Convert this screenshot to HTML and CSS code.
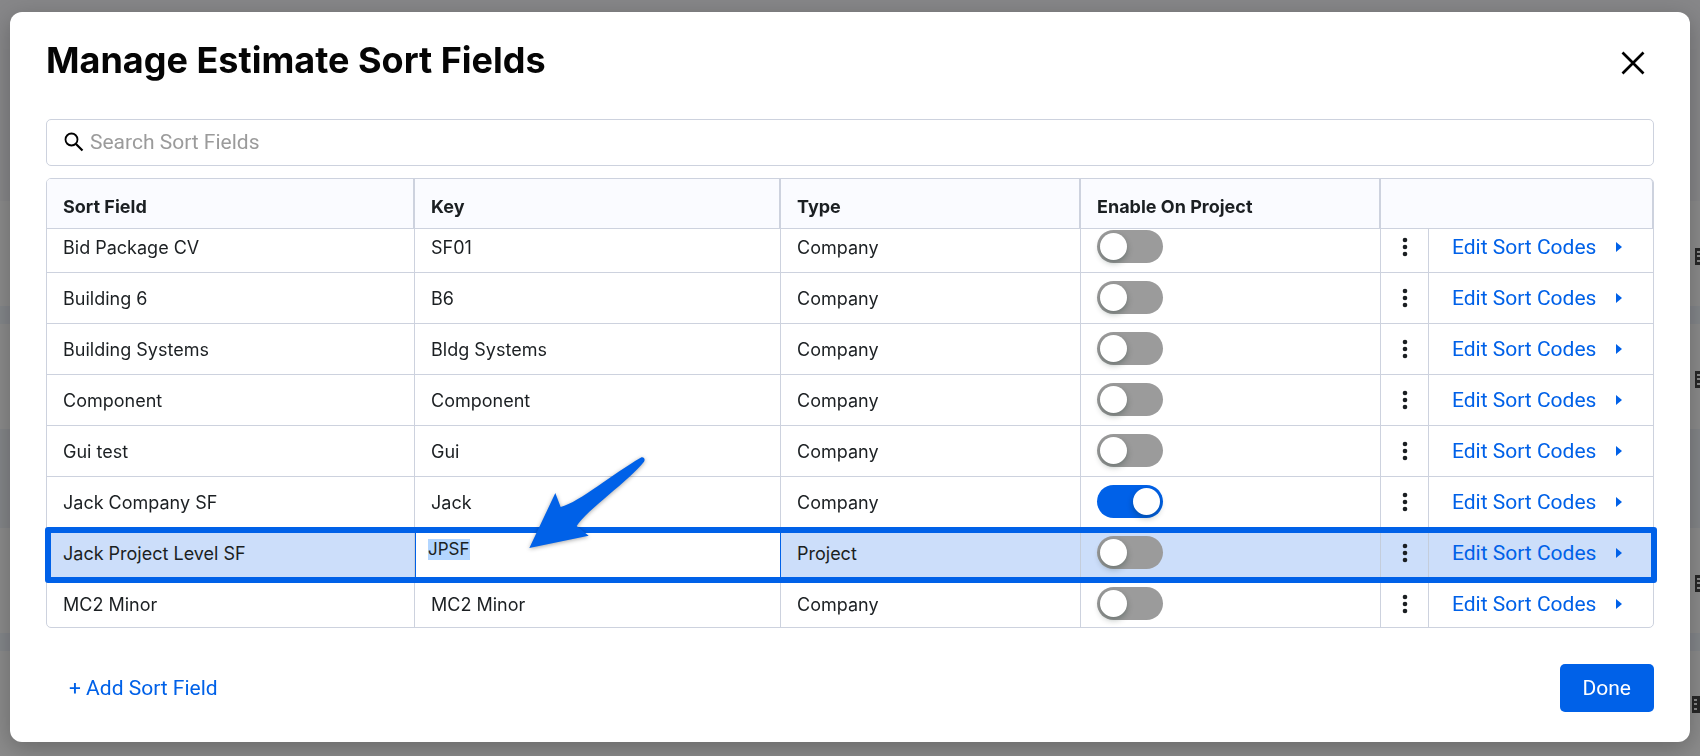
FILE: index.html
```html
<!DOCTYPE html>
<html lang="en">

<head>
    <meta charset="UTF-8">
    <meta name="viewport" content="width=device-width, initial-scale=1.0">
    <title>Manage Estimate Sort Fields</title>
    <link rel="stylesheet" href="styles.css">
</head>

<body>
    <svg class="symbols" aria-hidden="true">
        <symbol id="dots" viewBox="0 0 6 20">
            <circle cx="3" cy="3" r="2.3" />
            <circle cx="3" cy="10" r="2.3" />
            <circle cx="3" cy="17" r="2.3" />
        </symbol>
        <symbol id="caret" viewBox="0 0 6 10">
            <path d="M0 0 L6 5 L0 10 Z" />
        </symbol>
        <symbol id="building" viewBox="0 0 16 18">
            <path d="M0 1h8V0h8v18H0z" fill="#272727" />
            <path d="M2 4h3v2H2zM2 8h3v2H2zM2 13h3v2H2z" fill="#8a8a8a" />
        </symbol>
    </svg>

    <!-- page behind the dialog -->
    <div class="backdrop" aria-hidden="true">
        <div class="band band-top"></div>
        <div class="band band-item"><svg class="building"><use href="#building" /></svg></div>
        <div class="band band-gap"></div>
        <div class="band band-item"><svg class="building"><use href="#building" /></svg></div>
        <div class="band band-group"></div>
        <div class="band band-item"><svg class="building"><use href="#building" /></svg></div>
        <div class="band band-gap"></div>
        <div class="band band-item band-last"><svg class="building"><use href="#building" /></svg></div>
    </div>

    <div class="overlay">
        <div class="modal" role="dialog" aria-labelledby="modal-title">
            <div class="modal-header">
                <h1 id="modal-title">Manage Estimate Sort Fields</h1>
                <button class="close" aria-label="Close">
                    <svg width="24" height="24" viewBox="0 0 24 24">
                        <path d="M1.5 1.5 L22.5 22.5 M22.5 1.5 L1.5 22.5" fill="none" stroke="#000" stroke-width="2.7" />
                    </svg>
                </button>
            </div>

            <label class="search">
                <svg width="20" height="20" viewBox="0 0 20 20">
                    <circle cx="7.5" cy="7.5" r="6" fill="none" stroke="#000" stroke-width="1.8" />
                    <path d="M12 12 L18.5 18.5" stroke="#000" stroke-width="2.2" />
                </svg>
                <input type="text" placeholder="Search Sort Fields" aria-label="Search Sort Fields">
            </label>

            <div class="table-wrap">
                <table>
                    <colgroup>
                        <col>
                        <col class="col-key">
                        <col class="col-type">
                        <col class="col-enable">
                        <col class="col-menu">
                        <col class="col-edit">
                    </colgroup>
                    <thead>
                        <tr>
                            <th>Sort Field</th>
                            <th>Key</th>
                            <th>Type</th>
                            <th>Enable On Project</th>
                            <th colspan="2"></th>
                        </tr>
                    </thead>
                    <tbody>
                        <tr>
                            <td>Bid Package CV</td>
                            <td>SF01</td>
                            <td>Company</td>
                            <td class="enable"><input type="checkbox" class="toggle" aria-label="Enable Bid Package CV"></td>
                            <td class="menu"><button class="more" aria-label="More"><svg width="6" height="20"><use href="#dots" /></svg></button></td>
                            <td class="edit"><button class="link">Edit Sort Codes <svg width="6" height="10"><use href="#caret" /></svg></button></td>
                        </tr>
                        <tr>
                            <td>Building 6</td>
                            <td>B6</td>
                            <td>Company</td>
                            <td class="enable"><input type="checkbox" class="toggle" aria-label="Enable Building 6"></td>
                            <td class="menu"><button class="more" aria-label="More"><svg width="6" height="20"><use href="#dots" /></svg></button></td>
                            <td class="edit"><button class="link">Edit Sort Codes <svg width="6" height="10"><use href="#caret" /></svg></button></td>
                        </tr>
                        <tr>
                            <td>Building Systems</td>
                            <td>Bldg Systems</td>
                            <td>Company</td>
                            <td class="enable"><input type="checkbox" class="toggle" aria-label="Enable Building Systems"></td>
                            <td class="menu"><button class="more" aria-label="More"><svg width="6" height="20"><use href="#dots" /></svg></button></td>
                            <td class="edit"><button class="link">Edit Sort Codes <svg width="6" height="10"><use href="#caret" /></svg></button></td>
                        </tr>
                        <tr>
                            <td>Component</td>
                            <td>Component</td>
                            <td>Company</td>
                            <td class="enable"><input type="checkbox" class="toggle" aria-label="Enable Component"></td>
                            <td class="menu"><button class="more" aria-label="More"><svg width="6" height="20"><use href="#dots" /></svg></button></td>
                            <td class="edit"><button class="link">Edit Sort Codes <svg width="6" height="10"><use href="#caret" /></svg></button></td>
                        </tr>
                        <tr>
                            <td>Gui test</td>
                            <td>Gui</td>
                            <td>Company</td>
                            <td class="enable"><input type="checkbox" class="toggle" aria-label="Enable Gui test"></td>
                            <td class="menu"><button class="more" aria-label="More"><svg width="6" height="20"><use href="#dots" /></svg></button></td>
                            <td class="edit"><button class="link">Edit Sort Codes <svg width="6" height="10"><use href="#caret" /></svg></button></td>
                        </tr>
                        <tr>
                            <td>Jack Company SF</td>
                            <td>Jack</td>
                            <td>Company</td>
                            <td class="enable"><input type="checkbox" class="toggle" aria-label="Enable Jack Company SF" checked></td>
                            <td class="menu"><button class="more" aria-label="More"><svg width="6" height="20"><use href="#dots" /></svg></button></td>
                            <td class="edit"><button class="link">Edit Sort Codes <svg width="6" height="10"><use href="#caret" /></svg></button></td>
                        </tr>
                        <tr class="selected">
                            <td>Jack Project Level SF<span class="highlight"></span></td>
                            <td class="editing">
                                <input type="text" class="key-input" value="JPSF" size="4" aria-label="Key">
                                <svg class="pointer" width="120" height="95" viewBox="381 78 360 285">
                                    <path d="M388 354 L466 189 L482 231 C540 215 640 130 722 83 C731 79 737 88 732 95 C690 150 560 240 530 288 L566 317 Z" />
                                </svg>
                            </td>
                            <td>Project</td>
                            <td class="enable"><input type="checkbox" class="toggle" aria-label="Enable Jack Project Level SF"></td>
                            <td class="menu"><button class="more" aria-label="More"><svg width="6" height="20"><use href="#dots" /></svg></button></td>
                            <td class="edit"><button class="link">Edit Sort Codes <svg width="6" height="10"><use href="#caret" /></svg></button></td>
                        </tr>
                        <tr>
                            <td>MC2 Minor</td>
                            <td>MC2 Minor</td>
                            <td>Company</td>
                            <td class="enable"><input type="checkbox" class="toggle" aria-label="Enable MC2 Minor"></td>
                            <td class="menu"><button class="more" aria-label="More"><svg width="6" height="20"><use href="#dots" /></svg></button></td>
                            <td class="edit"><button class="link">Edit Sort Codes <svg width="6" height="10"><use href="#caret" /></svg></button></td>
                        </tr>
                    </tbody>
                </table>
            </div>

            <div class="modal-footer">
                <button class="link">+ Add Sort Field</button>
                <button class="done">Done</button>
            </div>
        </div>
    </div>
</body>

</html>
```

FILE: styles.css
```css
* {
    box-sizing: border-box;
}

body {
    margin: 0;
    height: 100vh;
    overflow: hidden;
    font-family: Inter, sans-serif;
    font-size: 18px;
    line-height: 24px;
    color: #1b1f22;
    background-color: #868686;
}

button {
    padding: 0;
    border: none;
    background: none;
    font-family: Roboto, sans-serif;
    font-size: 21px;
    line-height: 24px;
    cursor: pointer;
}

.symbols {
    position: absolute;
    width: 0;
    height: 0;
}

/* page behind the dialog */
.backdrop {
    display: flex;
    flex-direction: column;
    height: 100vh;
    overflow: hidden;
}

.band {
    display: flex;
    justify-content: flex-end;
    flex-shrink: 0;
    overflow: hidden;
    background-color: #8b8b8b;
}

.band-top {
    height: 201px;
    background-color: #878789;
}

.band-item {
    height: 105px;
    padding-top: 46px;
}

.band-gap {
    height: 18px;
    background-color: #83868a;
}

.band-group {
    height: 99px;
    background-color: #838588;
}

.building {
    width: 16px;
    height: 18px;
    margin-right: -11px;
}

.band-last {
    padding-top: 44px;
}

.band-last .building {
    margin-right: -8px;
}

/* dialog */
.overlay {
    position: fixed;
    inset: 0;
    padding: 12px 10px;
}

.modal {
    padding: 26px 36px 30px;
    border-radius: 12px;
    background-color: #fff;
    box-shadow: 0 6px 24px rgba(0, 0, 0, 0.25);
}

.modal-header {
    display: flex;
    justify-content: space-between;
    align-items: flex-start;
    margin-bottom: 31px;
}

h1 {
    margin: 0;
    font-size: 36px;
    line-height: 44px;
    font-weight: 700;
    color: #050505;
}

.close {
    display: flex;
    align-items: center;
    justify-content: center;
    width: 42px;
    height: 50px;
}

.search {
    display: flex;
    align-items: center;
    gap: 6px;
    height: 47px;
    margin-bottom: 12px;
    padding: 0 17px 2px;
    border: 1px solid #cdd2de;
    border-radius: 5px;
}

.search input {
    flex: 1;
    padding: 0;
    border: none;
    outline: none;
    font-family: Roboto, sans-serif;
    font-size: 21px;
    line-height: 24px;
}

.search input::placeholder {
    color: #9b9b9b;
}

/* table */
.table-wrap {
    border: 1px solid #cdd2de;
    border-radius: 5px;
}

table {
    width: 100%;
    table-layout: fixed;
    border-collapse: separate;
    border-spacing: 0;
}

.col-key {
    width: 366px;
}

.col-type,
.col-enable {
    width: 300px;
}

.col-menu {
    width: 48px;
}

.col-edit {
    width: 224px;
}

th {
    height: 50px;
    padding: 6px 16px 0;
    border-right: 2px solid #cdd2de;
    border-bottom: 1px solid #cdd2de;
    background-color: #fafbff;
    font-weight: 700;
    text-align: left;
}

th:first-child {
    border-top-left-radius: 4px;
}

th:last-child {
    border-right-width: 1px;
    border-top-right-radius: 4px;
}

tbody tr {
    height: 51px;
}

td {
    padding: 0 16px 12px;
    border-right: 1px solid #cdd2de;
    border-bottom: 1px solid #cdd2de;
    vertical-align: bottom;
}

td:last-child {
    border-right: none;
}

td.enable {
    padding-bottom: 9px;
}

td.menu {
    padding: 0 0 13px;
}

td.edit {
    padding: 0 23px 13px;
}

tbody tr:first-child {
    height: 44px;
}

tbody tr:last-child {
    height: 48px;
}

tr:last-child td {
    padding-bottom: 10px;
    border-bottom: none;
}

tr:last-child td.enable {
    padding-bottom: 7px;
}

tr:last-child td.menu,
tr:last-child td.edit {
    padding-bottom: 11px;
}

.toggle {
    appearance: none;
    display: block;
    width: 66px;
    height: 33px;
    margin: 0;
    padding: 3px;
    border-radius: 17px;
    background-color: #9b9b9b;
    cursor: pointer;
}

.toggle::before {
    content: "";
    display: block;
    width: 27px;
    height: 27px;
    border-radius: 50%;
    background-color: #fff;
    box-shadow: 0 3px 6px rgba(0, 30, 20, 0.3);
}

.toggle:checked {
    background-color: #0061e8;
}

.toggle:checked::before {
    margin-left: auto;
}

.more {
    display: flex;
    align-items: center;
    justify-content: center;
    width: 100%;
    height: 24px;
    fill: #1b1f22;
}

.link {
    display: flex;
    align-items: center;
    gap: 20px;
    color: #0061e8;
    fill: #0061e8;
    white-space: nowrap;
}

/* selected row */
.selected {
    position: relative;
    background-color: #ccdefa;
}

.selected td {
    border-right-color: #c4cddb;
}

.highlight {
    position: absolute;
    inset: -1px -4px -4px -2px;
    border: 6px solid #0061e8;
    border-radius: 3px;
    pointer-events: none;
}

.selected .editing {
    position: relative;
    padding: 11px 12px 0;
    border-left: 1px solid #0061e8;
    border-right-color: #0061e8;
    background-color: #fff;
    background-clip: padding-box;
    vertical-align: top;
}

.key-input {
    display: block;
    field-sizing: content;
    height: 21px;
    padding: 0;
    border: none;
    outline: none;
    font-family: Inter, sans-serif;
    font-size: 17px;
    line-height: 21px;
    color: #1b1f22;
    background-color: #b3d6ff;
}

.highlight,
.pointer {
    z-index: 1;
}

.pointer {
    position: absolute;
    top: -72px;
    left: 111px;
    fill: #0061e8;
    filter: drop-shadow(0 1px 2px rgba(0, 0, 0, 0.35));
    pointer-events: none;
}

/* footer */
.modal-footer {
    display: flex;
    justify-content: space-between;
    align-items: center;
    margin-top: 36px;
    padding-left: 23px;
}

.done {
    padding: 12px 23px;
    border-radius: 5px;
    color: #fff;
    background-color: #0061e8;
}
```
